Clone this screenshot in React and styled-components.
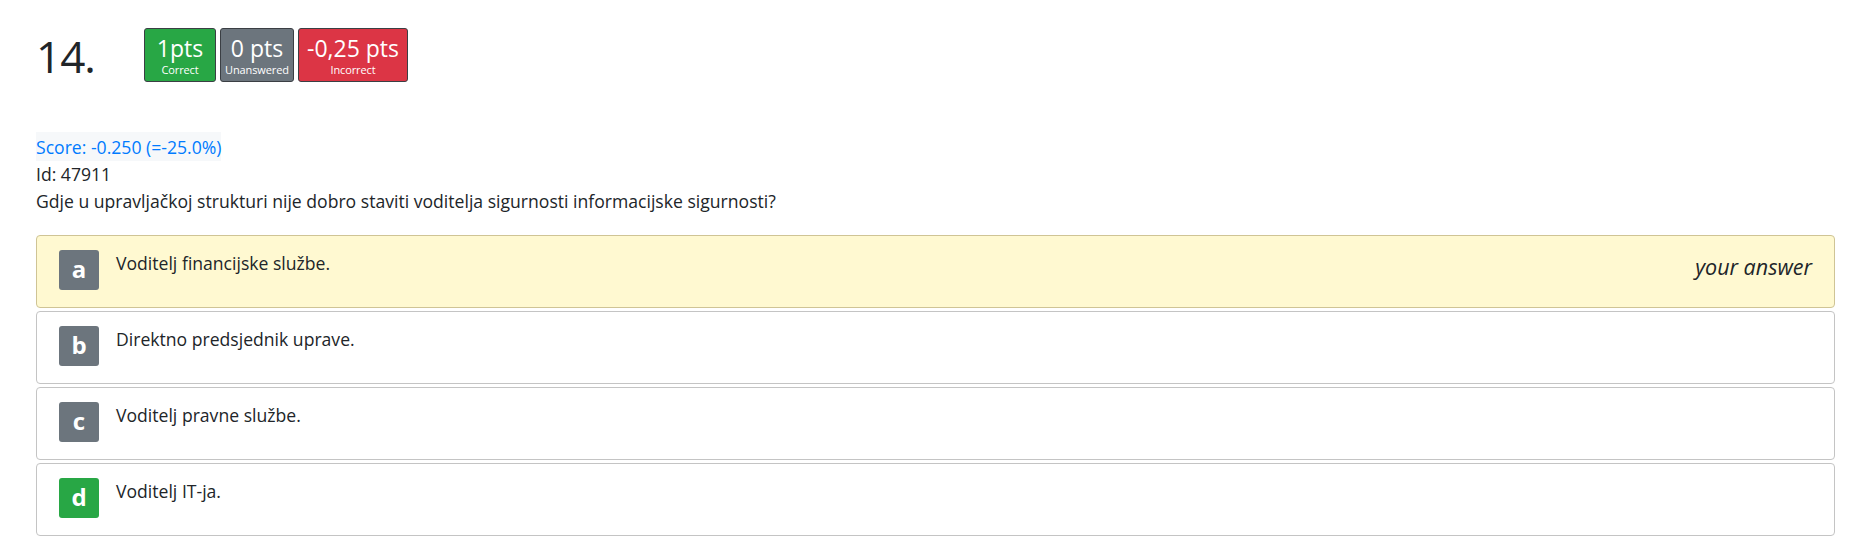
import React from "react";
import styled, { createGlobalStyle } from "styled-components";

const GlobalStyle = createGlobalStyle`
  body {
    margin: 0;
    background: #fff;
    font-family: "Open Sans", "Noto Sans", sans-serif;
    color: #212529;
  }
`;

const Page = styled.div`
  padding: 28px 22px 20px 36px;
`;

const Header = styled.div`
  display: flex;
  align-items: flex-start;
`;

const Number = styled.h1`
  width: 108px;
  margin: 0;
  padding-top: 2px;
  font-size: 44px;
  font-weight: 400;
  line-height: 52px;
  letter-spacing: -1px;
`;

const Badges = styled.div`
  display: flex;
  gap: 4px;
`;

const Badge = styled.div`
  display: flex;
  flex-direction: column;
  align-items: center;
  height: 54px;
  box-sizing: border-box;
  padding: 5px 4px 0;
  min-width: ${(p) => p.$min}px;
  border: 1px solid #3b3f44;
  border-radius: 3px;
  background: ${(p) => p.$bg};
  color: #fff;
  .big {
    font-size: 23px;
    line-height: 28px;
  }
  .small {
    font-size: 11px;
    line-height: 16px;
    letter-spacing: -0.1px;
  }
`;

const Meta = styled.div`
  margin-top: 50px;
  font-size: 17.6px;
  line-height: 27px;
`;

const Score = styled.div`
  display: inline-block;
  color: #007bff;
  background: #f6f8fa;
  padding-top: 2px;
`;

const Options = styled.div`
  display: flex;
  flex-direction: column;
  gap: 3px;
  margin-top: 20px;
`;

const Option = styled.div`
  display: flex;
  align-items: flex-start;
  height: 73px;
  box-sizing: border-box;
  padding: 14px 22px 0 22px;
  border: 1px solid ${(p) => (p.$selected ? "#cfc495" : "#c4c4c4")};
  border-radius: 4px;
  background: ${(p) => (p.$selected ? "#fff9d1" : "#fff")};
`;

const Letter = styled.div`
  width: 40px;
  height: 40px;
  flex: none;
  display: flex;
  align-items: center;
  justify-content: center;
  border-radius: 3px;
  background: ${(p) => (p.$correct ? "#28a745" : "#6c757d")};
  color: #fff;
  font-size: 24px;
  font-weight: 700;
  line-height: 1;
  padding-bottom: 3px;
  box-sizing: border-box;
`;

const OptionText = styled.div`
  flex: 1;
  margin-left: 17px;
  padding-top: 1px;
  font-size: 17.6px;
  line-height: 24px;
`;

const YourAnswer = styled.div`
  font-style: italic;
  font-size: 21.5px;
  line-height: 28px;
  padding-top: 3px;
`;

const options = [
  { key: "a", text: "Voditelj financijske službe.", selected: true },
  { key: "b", text: "Direktno predsjednik uprave." },
  { key: "c", text: "Voditelj pravne službe." },
  { key: "d", text: "Voditelj IT-ja.", correct: true },
];

export default function App() {
  return (
    <Page>
      <GlobalStyle />
      <Header>
        <Number>14.</Number>
        <Badges>
          <Badge $bg="#28a745" $min={72}>
            <span className="big">1pts</span>
            <span className="small">Correct</span>
          </Badge>
          <Badge $bg="#6c757d" $min={74}>
            <span className="big">0 pts</span>
            <span className="small">Unanswered</span>
          </Badge>
          <Badge $bg="#dc3545" $min={110}>
            <span className="big">-0,25 pts</span>
            <span className="small">Incorrect</span>
          </Badge>
        </Badges>
      </Header>
      <Meta>
        <Score>Score: -0.250 (=-25.0%)</Score>
        <div>Id: 47911</div>
        <div>
          Gdje u upravljačkoj strukturi nije dobro staviti voditelja sigurnosti
          informacijske sigurnosti?
        </div>
      </Meta>
      <Options>
        {options.map((o) => (
          <Option key={o.key} $selected={o.selected}>
            <Letter $correct={o.correct}>{o.key}</Letter>
            <OptionText>{o.text}</OptionText>
            {o.selected && <YourAnswer>your answer</YourAnswer>}
          </Option>
        ))}
      </Options>
    </Page>
  );
}
